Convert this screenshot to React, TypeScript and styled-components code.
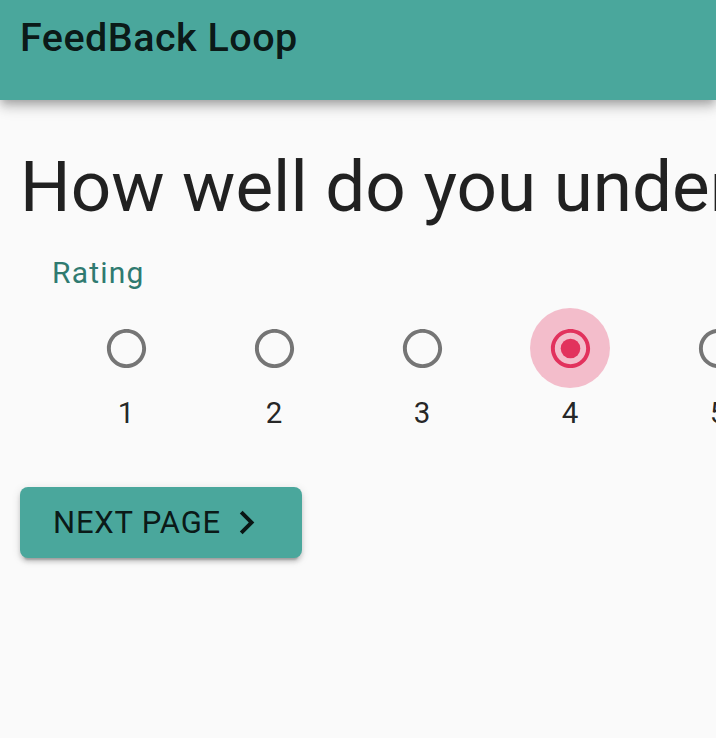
import React, { useState } from 'react';
import styled, { createGlobalStyle } from 'styled-components';

const GlobalStyle = createGlobalStyle`
  html, body {
    margin: 0;
    padding: 0;
    background: #fafafa;
    overflow: hidden;
  }
  body {
    font-family: Roboto, 'Liberation Sans', sans-serif;
  }
`;

const Page = styled.div`
  width: 716px;
  min-height: 738px;
  background: #fafafa;
  overflow: hidden;
`;

const AppBar = styled.header`
  box-sizing: border-box;
  height: 100px;
  padding: 14px 20px 0;
  background: #4aa79c;
  box-shadow: 0 4px 8px -2px rgba(0, 0, 0, 0.2), 0 8px 10px 0 rgba(0, 0, 0, 0.14),
    0 2px 20px 0 rgba(0, 0, 0, 0.12);
  position: relative;
  z-index: 1;
`;

const Title = styled.h1`
  margin: 0;
  font-size: 39.5px;
  line-height: 1.2;
  font-weight: 500;
  color: rgba(0, 0, 0, 0.87);
  letter-spacing: 0.012em;
`;

const Content = styled.main`
  padding: 44px 20px 0;
`;

const Question = styled.h2`
  margin: 0;
  font-size: 71px;
  line-height: 1.2;
  font-weight: 400;
  color: rgba(0, 0, 0, 0.87);
  white-space: nowrap;
`;

const Field = styled.fieldset`
  margin: 26px 0 0;
  padding: 0 0 0 32px;
  border: 0;
  min-width: 0;
`;

const Legend = styled.legend`
  padding: 0;
  font-size: 30px;
  line-height: 1.2;
  letter-spacing: 0.04em;
  color: #2f7a70;
`;

const Options = styled.div`
  display: flex;
  margin-top: 17px;
  width: 900px;
`;

const Option = styled.label`
  width: 148px;
  flex: none;
  display: flex;
  flex-direction: column;
  align-items: center;
  gap: 8px;
  cursor: pointer;
`;

const Halo = styled.span<{ $checked: boolean }>`
  width: 80px;
  height: 80px;
  border-radius: 50%;
  display: flex;
  align-items: center;
  justify-content: center;
  background: ${({ $checked }) => ($checked ? 'rgba(230, 50, 95, 0.3)' : 'transparent')};
  color: ${({ $checked }) => ($checked ? '#e2325d' : '#757575')};
`;

const HiddenInput = styled.input`
  position: absolute;
  opacity: 0;
  width: 0;
  height: 0;
`;

const Number = styled.span`
  font-size: 29.5px;
  line-height: 1.2;
  color: rgba(0, 0, 0, 0.87);
`;

const NextButton = styled.button`
  margin-top: 55px;
  box-sizing: border-box;
  width: 282px;
  height: 71px;
  padding: 0 0 0 33px;
  display: flex;
  align-items: center;
  white-space: nowrap;
  border: 0;
  border-radius: 8px;
  background: #4aa79c;
  color: rgba(0, 0, 0, 0.87);
  font-family: Roboto, 'Liberation Sans', sans-serif;
  font-size: 31px;
  font-weight: 400;
  letter-spacing: 0.025em;
  text-transform: uppercase;
  box-shadow: 0 6px 2px -4px rgba(0, 0, 0, 0.2), 0 4px 4px 0 rgba(0, 0, 0, 0.14),
    0 2px 10px 0 rgba(0, 0, 0, 0.12);
  cursor: pointer;
`;

const ButtonIcon = styled.svg`
  width: 47px;
  height: 47px;
  margin-left: 2px;
  flex: none;
`;

const RadioIcon: React.FC<{ checked: boolean }> = ({ checked }) => (
  <svg width="47" height="47" viewBox="0 0 24 24" fill="currentColor">
    <path d="M12 2C6.48 2 2 6.48 2 12s4.48 10 10 10 10-4.48 10-10S17.52 2 12 2zm0 18c-4.42 0-8-3.58-8-8s3.58-8 8-8 8 3.58 8 8-3.58 8-8 8z" />
    {checked && <circle cx="12" cy="12" r="5" />}
  </svg>
);

const ratings = [1, 2, 3, 4, 5];

const App: React.FC = () => {
  const [value, setValue] = useState(4);

  return (
    <Page>
      <GlobalStyle />
      <AppBar>
        <Title>FeedBack Loop</Title>
      </AppBar>
      <Content>
        <Question>How well do you understand the material?</Question>
        <Field>
          <Legend>Rating</Legend>
          <Options>
            {ratings.map((r) => (
              <Option key={r}>
                <HiddenInput
                  type="radio"
                  name="rating"
                  value={r}
                  checked={value === r}
                  onChange={() => setValue(r)}
                />
                <Halo $checked={value === r}>
                  <RadioIcon checked={value === r} />
                </Halo>
                <Number>{r}</Number>
              </Option>
            ))}
          </Options>
        </Field>
        <NextButton type="button">
          Next Page
          <ButtonIcon viewBox="0 0 24 24" fill="currentColor">
            <path d="M10 6 8.59 7.41 13.17 12l-4.58 4.59L10 18l6-6z" />
          </ButtonIcon>
        </NextButton>
      </Content>
    </Page>
  );
};

export default App;
